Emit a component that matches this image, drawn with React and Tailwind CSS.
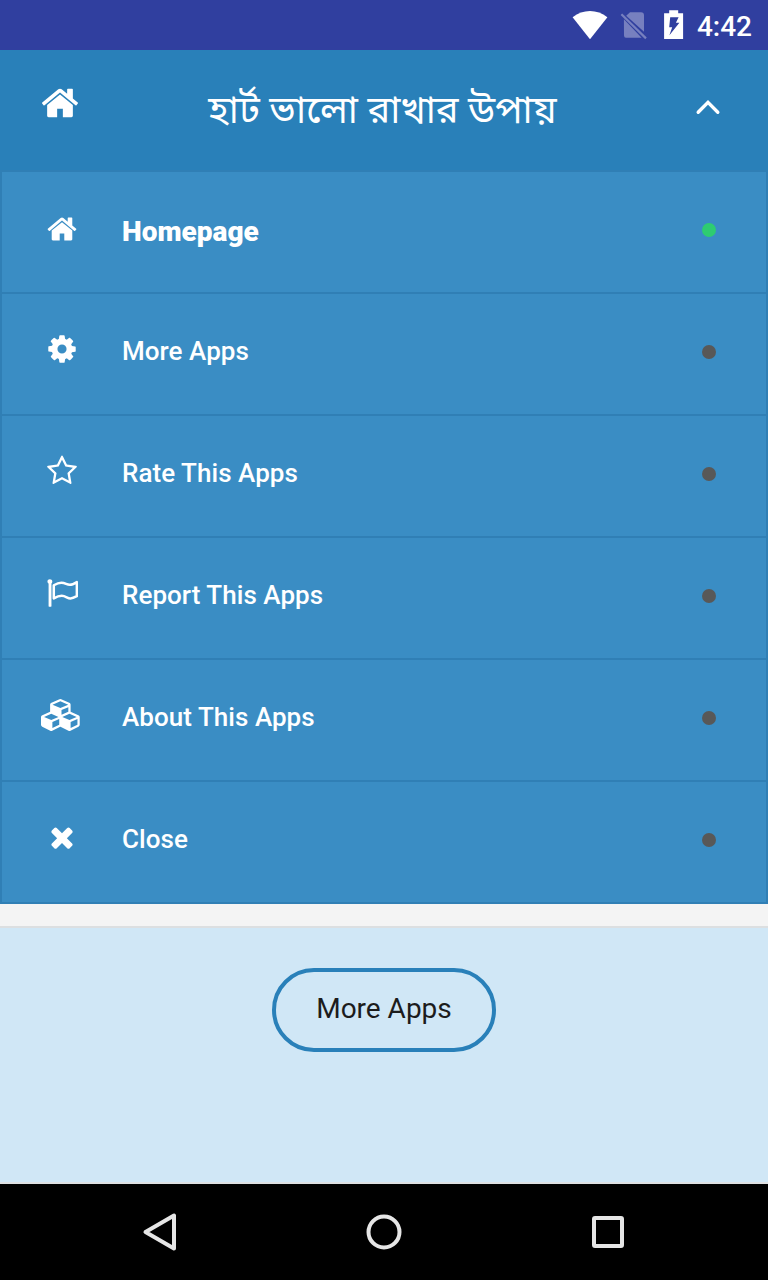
const HOME =
  'M1472 992v480q0 26-19 45t-45 19h-384v-384h-256v384h-384q-26 0-45-19t-19-45v-480q0-1 .5-3t.5-3l575-474 575 474q1 2 1 6zm223-69l-62 74q-8 9-21 11h-3q-13 0-21-7l-692-577-692 577q-12 8-24 7-13-2-21-11l-62-74q-8-10-7-23.5t11-21.5l719-599q32-26 76-26t76 26l244 204v-195q0-14 9-23t23-9h192q14 0 23 9t9 23v408l219 182q10 8 11 21.5t-7 23.5z';
const COG =
  'M1152 896q0-106-75-181t-181-75-181 75-75 181 75 181 181 75 181-75 75-181zm512-109v222q0 12-8 23t-20 13l-185 28q-19 54-39 91 35 50 107 138 10 12 10 25t-9 23q-27 37-99 108t-94 71q-12 0-26-9l-138-108q-44 23-91 38-16 136-29 186-7 28-36 28h-222q-14 0-24.5-8.5t-11.5-21.5l-28-184q-49-16-90-37l-141 107q-10 9-25 9-14 0-25-11-126-114-165-168-7-10-7-23 0-12 8-23 15-21 51-66.5t54-70.5q-27-50-41-99l-183-27q-13-2-21-12.5t-8-23.5v-222q0-12 8-23t19-13l186-28q14-46 39-92-40-57-107-138-10-12-10-24 0-10 9-23 26-36 98.5-107.5t94.5-71.5q13 0 26 10l138 107q44-23 91-38 16-136 29-186 7-28 36-28h222q14 0 24.5 8.5t11.5 21.5l28 184q49 16 90 37l142-107q9-9 24-9 13 0 25 10 129 119 165 170 7 8 7 22 0 12-8 23-15 21-51 66.5t-54 70.5q26 50 41 98l183 28q13 2 21 12.5t8 23.5z';
const STAR =
  'M1201 1004l306-297-422-62-189-382-189 382-422 62 306 297-73 421 378-199 377 199zm527-357q0 22-26 48l-363 354 86 500q1 7 1 20 0 50-41 50-19 0-40-12l-449-236-449 236q-22 12-40 12-21 0-31.5-14.5t-10.5-35.5q0-6 2-20l86-500-364-354q-25-27-25-48 0-37 56-46l502-73 225-455q19-41 49-41t49 41l225 455 502 73q56 9 56 46z';
const FLAG =
  'M352 256q0 45-17.5 64t-29.5 46v1266q0 14-9 23t-23 9h-96q-14 0-23-9t-9-23v-1266q-29-17-46.5-46t-17.5-64q0-58 40-96t95-38 95 38 41 96z';
const FLAG_CLOTH =
  'M436 462C590 375 735 325 860 325C1090 325 1150 440 1330 440C1450 440 1590 370 1728 285V1075C1590 1150 1480 1200 1366 1200C1200 1200 1100 1055 880 1055C730 1055 580 1115 436 1195Z';
const CUBES =
  'M640 1632l384-192v-314l-384 164v342zm-64-454l404-173-404-173-404 173zm1088 454l384-192v-314l-384 164v342zm-64-454l404-173-404-173-404 173zm-448-293l384-165v-266l-384 164v267zm-64-379l441-189-441-189-441 189zm1088 518v416q0 36-19 67t-52 47l-448 224q-25 14-57 14t-57-14l-448-224q-4-2-7-4-2 2-7 4l-448 224q-25 14-57 14t-57-14l-448-224q-33-16-52-47t-19-67v-416q0-38 21.5-70t56.5-48l434-186v-400q0-38 21.5-70t56.5-48l448-192q23-10 50-10t50 10l448 192q35 16 56.5 48t21.5 70v400l434 186q36 16 57 48t21 70z';
const TIMES =
  'M1490 1322q0 40-28 68l-136 136q-28 28-68 28t-68-28l-294-294-294 294q-28 28-68 28t-68-28l-136-136q-28-28-28-68t28-68l294-294-294-294q-28-28-28-68t28-68l136-136q28-28 68-28t68 28l294 294 294-294q28-28 68-28t68 28l136 136q28 28 28 68t-28 68l-294 294 294 294q28 28 28 68z';

const ITEMS = [
  { label: 'Homepage', path: HOME, active: true },
  { label: 'More Apps', path: COG },
  { label: 'Rate This Apps', path: STAR },
  { label: 'Report This Apps', path: FLAG, outline: FLAG_CLOTH },
  { label: 'About This Apps', path: CUBES, wide: true },
  { label: 'Close', path: TIMES },
];

function Glyph({ path, outline, wide, className }) {
  return (
    <svg viewBox={wide ? '0 0 2304 1792' : '0 0 1792 1792'} fill="currentColor" className={className}>
      <path d={path} />
      {outline && <path d={outline} fill="none" stroke="currentColor" strokeWidth="140" strokeLinejoin="round" />}
    </svg>
  );
}

function StatusBar() {
  return (
    <div className="flex h-[50px] items-center justify-end bg-[#303f9f] pr-4">
      <svg viewBox="0 0 36 30" className="mr-[11px] h-[30px] w-9" fill="#fff">
        <path d="M18 29.3 L0.6 7.2 C11 -1 25 -1 35.4 7.2 Z" />
      </svg>
      <svg viewBox="0 0 28 30" className="mr-[17px] h-[30px] w-7">
        <path d="M11 2.2 H22 Q25 2.2 25 5.2 V21.8 L7.2 5.8 Z" fill="#7780bf" />
        <path d="M4.9 9.2 L22.6 27.8 H7 Q5 27.8 5 25.6 Z" fill="#7780bf" />
        <path d="M2.4 4.3 L27 28.4" stroke="#7780bf" strokeWidth="2.2" />
      </svg>
      <svg viewBox="0 0 20 30" className="mr-[13px] h-[30px] w-5">
        <path d="M5.2 0.2 h9 v3 h4.9 V29 H0.1 V3.2 h5.1 Z" fill="#fff" />
        <path d="M6.2 7.2 H14.6 L11.9 12.8 H15.4 L5.4 25.2 L8.2 17.2 H5.2 Z" fill="#303f9f" />
      </svg>
      <span className="pt-1 text-[28px] leading-[46px] font-medium text-white">4:42</span>
    </div>
  );
}

export default function App() {
  return (
    <div className="flex h-[1280px] w-[768px] flex-col overflow-hidden bg-[#f4f4f4] font-['Roboto',sans-serif]">
      <StatusBar />
      <header className="flex h-[120px] items-center justify-between bg-[#2980b9] pr-[44px] pl-[40px] text-white">
        <Glyph path={HOME} className="mb-3.5 h-10 w-10" />
        <h1 className="mr-[7px] text-[38.2px] leading-[60px] font-normal whitespace-nowrap font-['Roboto','Noto_Sans_Bengali',sans-serif]">
          হার্ট ভালো রাখার উপায়
        </h1>
        <svg viewBox="0 0 32 32" className="h-8 w-8" fill="none" stroke="#fff" strokeWidth="3.4">
          <path d="M6.2 18.2 L16 8.4 L25.8 18.2" strokeLinecap="round" />
        </svg>
      </header>
      <nav className="border-2 border-[#307fb5]">
        {ITEMS.map((item) => (
          <div
            key={item.label}
            className="flex h-[122px] items-center border-b-2 border-[#307fb5] bg-[#3a8dc4] text-white last:h-[120px] last:border-b-0"
          >
            <div className={item.active ? 'mb-[7px] flex w-[120px] justify-center' : 'mb-[11px] flex w-[120px] justify-center'}>
              <Glyph
                path={item.path}
                outline={item.outline}
                wide={item.wide}
                className={item.wide ? 'mr-px h-8 w-[41px]' : 'h-8 w-8'}
              />
            </div>
            <span
              className={
                item.active
                  ? 'flex-1 text-[28px] font-black'
                  : 'mb-1.5 flex-1 text-[26px] font-medium tracking-[0.05px]'
              }
            >
              {item.label}
            </span>
            <span
              className={
                item.active
                  ? 'mr-[50px] mb-1 size-3.5 rounded-full bg-[#2ecc71]'
                  : 'mr-[50px] mb-1 size-3.5 rounded-full bg-[#585858]'
              }
            />
          </div>
        ))}
      </nav>
      <main className="mt-[22px] flex h-[258px] flex-col items-center border-t-2 border-b-2 border-t-[#dcdfe1] border-b-[#dfe1e3] bg-[#d0e7f6] pt-10">
        <button className="h-[84px] w-[224px] rounded-full border-4 border-[#2980b9] pb-0.5 text-[28px] text-[#1c1c1c]">
          More Apps
        </button>
      </main>
      <div className="flex h-24 items-center justify-around bg-black px-12">
        <svg viewBox="0 0 40 40" className="size-10" fill="none" stroke="#e6e6e6" strokeWidth="4" strokeLinejoin="round">
          <path d="M5.5 20 L34 3.5 V36.5 Z" />
        </svg>
        <svg viewBox="0 0 40 40" className="size-10" fill="none" stroke="#e6e6e6" strokeWidth="4">
          <circle cx="20" cy="20" r="15.5" />
        </svg>
        <svg viewBox="0 0 40 40" className="size-10" fill="none" stroke="#e6e6e6" strokeWidth="4">
          <rect x="6" y="6" width="28" height="28" rx="1" />
        </svg>
      </div>
    </div>
  );
}
